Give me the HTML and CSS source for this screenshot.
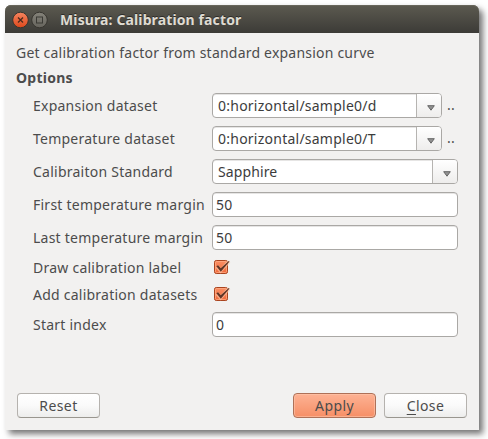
FILE: index.html
```html
<!DOCTYPE html>
<html lang="en">
<head>
<meta charset="utf-8">
<title>Misura: Calibration factor</title>
<link rel="stylesheet" href="styles.css">
</head>
<body>
<main class="window">
  <header class="titlebar">
    <svg class="controls" width="46" height="20" viewBox="0 0 46 20">
      <defs>
        <linearGradient id="red" x1="0" y1="0" x2="0" y2="1"><stop offset="0" stop-color="#f58560"/><stop offset="1" stop-color="#de481b"/></linearGradient>
        <linearGradient id="grey" x1="0" y1="0" x2="0" y2="1"><stop offset="0" stop-color="#85837a"/><stop offset="1" stop-color="#66645d"/></linearGradient>
      </defs>
      <circle cx="11.5" cy="10" r="7.8" fill="url(#red)" stroke="#37352f"/>
      <path d="M9 7.5l5 5M14 7.5l-5 5" stroke="#4c2a1c" stroke-width="1.3"/>
      <circle cx="30.5" cy="10" r="7.8" fill="url(#grey)" stroke="#37352f"/>
      <rect x="27.5" y="7" width="6" height="6" fill="none" stroke="#3b3a35"/>
    </svg>
    <h1 class="title">Misura: Calibration factor</h1>
  </header>
  <section class="content">
    <p class="intro">Get calibration factor from standard expansion curve</p>
    <h2 class="heading">Options</h2>
    <div class="form">
      <span class="label">Expansion dataset</span>
      <div class="field"><div class="combo short"><span class="value">0:horizontal/sample0/d</span><span class="arrow"><svg width="8" height="6" viewBox="0 0 8 6"><path d="M.7.7h6.6L4 5.2z" fill="#929292" stroke="#666"/></svg></span></div><span class="more">..</span></div>
      <span class="label">Temperature dataset</span>
      <div class="field"><div class="combo short"><span class="value">0:horizontal/sample0/T</span><span class="arrow"><svg width="8" height="6" viewBox="0 0 8 6"><path d="M.7.7h6.6L4 5.2z" fill="#929292" stroke="#666"/></svg></span></div><span class="more">..</span></div>
      <span class="label">Calibraiton Standard</span>
      <div class="combo"><span class="value tight">Sapphire</span><span class="arrow"><svg width="8" height="6" viewBox="0 0 8 6"><path d="M.7.7h6.6L4 5.2z" fill="#929292" stroke="#666"/></svg></span></div>
      <span class="label">First temperature margin</span>
      <div class="input">50</div>
      <span class="label">Last temperature margin</span>
      <div class="input">50</div>
      <span class="label">Draw calibration label</span>
      <svg class="check" width="19" height="19" viewBox="0 0 19 19"><defs><linearGradient id="box" x1="0" y1="0" x2="0" y2="1"><stop offset="0" stop-color="#fa9066"/><stop offset="1" stop-color="#f0693a"/></linearGradient></defs><rect x="2.5" y="2.5" width="13" height="13" rx="1.8" fill="url(#box)" stroke="#a9441f"/><rect x="3.5" y="3.5" width="11" height="11" rx="1" fill="none" stroke="#ffae88" stroke-opacity=".7"/><path d="M5 8.5l3.6 4.2L17 3.4" fill="none" stroke="#ffc6a8" stroke-width="3.6" stroke-opacity=".65"/><path d="M4.4 8.2l1.7-.9 2.6 3L16.8 2.9l.7.6-8.7 10.3z" fill="#5f3526"/></svg>
      <span class="label">Add calibration datasets</span>
      <svg class="check" width="19" height="19" viewBox="0 0 19 19"><rect x="2.5" y="2.5" width="13" height="13" rx="1.8" fill="url(#box)" stroke="#a9441f"/><rect x="3.5" y="3.5" width="11" height="11" rx="1" fill="none" stroke="#ffae88" stroke-opacity=".7"/><path d="M5 8.5l3.6 4.2L17 3.4" fill="none" stroke="#ffc6a8" stroke-width="3.6" stroke-opacity=".65"/><path d="M4.4 8.2l1.7-.9 2.6 3L16.8 2.9l.7.6-8.7 10.3z" fill="#5f3526"/></svg>
      <span class="label">Start index</span>
      <div class="input">0</div>
    </div>
    <footer class="actions">
      <button class="button reset">Reset</button>
      <button class="button primary">Apply</button>
      <button class="button"><span class="key">C</span>lose</button>
    </footer>
  </section>
</main>
</body>
</html>
```
FILE: styles.css
```css
* { box-sizing: border-box; }
body {
  margin: 0;
  padding: 5px;
  height: 439px;
  overflow: hidden;
  background: #fff;
  color: #4c4c4c;
  font: 14px "Noto Sans", "Open Sans", sans-serif;
  letter-spacing: .24px;
  white-space: nowrap;
}
.window {
  display: flex;
  flex-direction: column;
  width: 474px;
  height: 425px;
  background: #f2f1f0;
  border-radius: 6px 6px 0 0;
  box-shadow: 4px 4px 6px rgba(0, 0, 0, .55);
}
.titlebar {
  display: flex;
  align-items: center;
  height: 28px;
  padding-left: 4px;
  border-radius: 6px 6px 0 0;
  background: linear-gradient(#5c5a50, #3c3b37);
  box-shadow: inset 0 1px #68665b;
}
.controls { margin-top: 1px; }
.title {
  margin: 2px 0 0 5px;
  color: #dfdbd2;
  font-size: 14px;
  font-weight: 700;
  letter-spacing: .12px;
  line-height: 20px;
  text-shadow: 0 -1px #2c2b28;
}
.content {
  display: flex;
  flex: 1;
  flex-direction: column;
  padding: 10px 12px 12px 11px;
}
.intro { margin: 0; letter-spacing: .21px; line-height: 20px; }
.heading { margin: 5px 0 5px; font-size: 14px; font-weight: 700; line-height: 20px; }
.form {
  display: grid;
  grid-template-columns: 171px 246px;
  grid-template-rows: repeat(5, 25px) 19px 19px 25px;
  column-gap: 8px;
  row-gap: 8px;
  align-items: center;
  padding-left: 17px;
}
.label { line-height: 19px; }
.field { display: flex; align-items: center; }
.combo, .input {
  height: 25px;
  border: 1px solid #aaa8a5;
  border-radius: 4px;
  background: #fff;
  color: #3c3c3c;
  line-height: 23px;
  box-shadow: inset 0 1px #e6e5e4;
}
.input { padding-left: 3px; }
.combo { display: flex; }
.short { width: 230px; }
.value { flex: 1; padding-left: 5px; }
.tight { letter-spacing: .12px; }
.arrow {
  display: flex;
  align-items: center;
  justify-content: center;
  width: 25px;
  padding: 4px 0 0 3px;
  border-left: 1px solid #b6b4b1;
  border-radius: 0 3px 3px 0;
  background: linear-gradient(#fff, #eeedec);
}
.more { margin: -2px 0 0 5px; }
.check { overflow: visible; }
.actions { display: flex; gap: 8px; margin-top: auto; padding-left: 1px; }
.button {
  width: 83px;
  height: 25px;
  padding: 0;
  border: 1px solid #b5b2ae;
  border-bottom-color: #99968f;
  border-radius: 4px;
  background: linear-gradient(#fff, #fafafa 50%, #ededec);
  color: #4c4c4c;
  font: inherit;
  letter-spacing: .4px;
  line-height: 23px;
}
.reset { margin-right: auto; }
.primary {
  border-color: #ae7158;
  background: linear-gradient(#fdb294, #f68f66);
  box-shadow: inset 0 0 0 1px rgba(255, 200, 175, .55);
}
.key { text-decoration: underline; text-underline-offset: 3px; }
```
